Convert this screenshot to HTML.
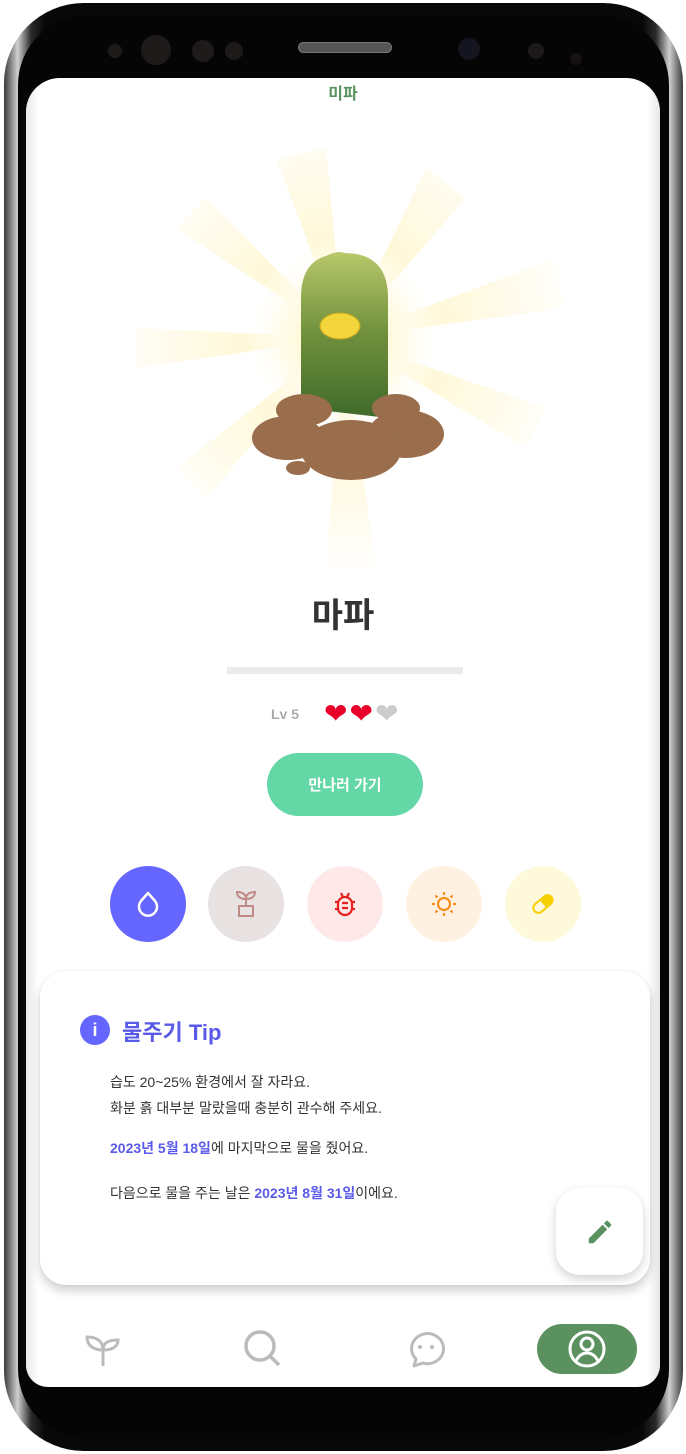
<!DOCTYPE html>
<html><head><meta charset="utf-8"><style>
*{margin:0;padding:0;box-sizing:border-box}
body{width:686px;height:1454px;background:#fff;position:relative;overflow:hidden;font-family:"Liberation Sans","Noto Sans CJK KR",sans-serif}
.phone{position:absolute;left:4px;top:3px;width:679px;height:1448px;border-radius:80px;background:linear-gradient(90deg,#3a3a3a,#cfcfcf 2%,#2a2a2a 4%,#080808 6%,#080808 94%,#2a2a2a 96%,#cfcfcf 98%,#3a3a3a)}
.inner{position:absolute;left:14px;top:12px;width:651px;height:1424px;border-radius:70px;background:#050505}
.screen{position:absolute;left:26px;top:78px;width:634px;height:1309px;background:#fff;border-radius:34px 34px 22px 22px;overflow:hidden}
.t{position:absolute;left:0;width:100%;text-align:center}
.circ{position:absolute;top:788px;width:76px;height:76px;border-radius:50%;display:flex;align-items:center;justify-content:center}
</style></head><body>
<div class="phone"><div class="inner"></div></div>
<div style="position:absolute;left:108px;top:44px;width:14px;height:14px;border-radius:50%;background:#1e1a1a"></div>
<div style="position:absolute;left:141px;top:35px;width:30px;height:30px;border-radius:50%;background:#1e1a1a"></div>
<div style="position:absolute;left:192px;top:40px;width:22px;height:22px;border-radius:50%;background:#1e1a1a"></div>
<div style="position:absolute;left:225px;top:42px;width:18px;height:18px;border-radius:50%;background:#1e1a1a"></div>
<div style="position:absolute;left:298px;top:42px;width:94px;height:11px;border-radius:6px;background:#555;border:1px solid #777"></div>
<div style="position:absolute;left:458px;top:38px;width:22px;height:22px;border-radius:50%;background:#151520"></div>
<div style="position:absolute;left:528px;top:43px;width:16px;height:16px;border-radius:50%;background:#1e1a1a"></div>
<div style="position:absolute;left:570px;top:53px;width:12px;height:12px;border-radius:50%;background:#161212"></div>

<div class="screen">
<div style="position:absolute;left:0;top:0;width:12px;height:100%;background:linear-gradient(90deg,#e6e6e6,#fff)"></div>
<div style="position:absolute;right:0;top:0;width:12px;height:100%;background:linear-gradient(270deg,#e6e6e6,#fff)"></div>
<div class="t" style="top:2px;color:#5a915f;font-weight:bold;font-size:16px">미파</div>
<svg style="position:absolute;left:0;top:60px" width="634" height="460" viewBox="0 0 634 460">
<defs><radialGradient id="g" cx="50%" cy="50%" r="50%"><stop offset="0" stop-color="#fff6b8"/><stop offset=".6" stop-color="#fffbe8"/><stop offset="1" stop-color="#fff" stop-opacity="0"/></radialGradient>
<radialGradient id="r" gradientUnits="userSpaceOnUse" cx="318" cy="200" r="240"><stop offset="0" stop-color="#fff3b0"/><stop offset=".7" stop-color="#fffae6"/><stop offset="1" stop-color="#fff"/></radialGradient>
<linearGradient id="c" x1="0" y1="0" x2="0" y2="1"><stop offset="0" stop-color="#b8c86a"/><stop offset=".5" stop-color="#6f8f3c"/><stop offset="1" stop-color="#3f6a2a"/></linearGradient></defs>
<g fill="url(#r)" opacity=".8">
<polygon points="318,200 250,20 300,10"/><polygon points="318,200 400,30 440,60"/><polygon points="318,200 530,120 540,170"/><polygon points="318,200 520,270 500,310"/><polygon points="318,200 350,430 300,430"/><polygon points="318,200 150,90 180,60"/><polygon points="318,200 110,230 110,190"/><polygon points="318,200 150,330 180,360"/>
</g>
<circle cx="318" cy="200" r="100" fill="url(#g)"/>
<path d="M275,270 L275,160 Q275,125 300,118 Q312,112 318,115 Q362,115 362,160 L362,280 Z" fill="url(#c)"/>
<ellipse cx="314" cy="188" rx="20" ry="13" fill="#f2d53a" stroke="#c9a820" stroke-width="1"/>
<g fill="#9a6e4c"><ellipse cx="262" cy="300" rx="36" ry="22"/><ellipse cx="380" cy="296" rx="38" ry="24"/><ellipse cx="325" cy="312" rx="50" ry="30"/><ellipse cx="278" cy="272" rx="28" ry="16"/><ellipse cx="370" cy="270" rx="24" ry="14"/><ellipse cx="272" cy="330" rx="12" ry="7"/></g>
</svg>
<div class="t" style="top:510px;font-size:34px;font-weight:bold;color:#333">마파</div>
<div style="position:absolute;left:201px;top:589px;width:236px;height:7px;background:#ebebeb"></div>
<div style="position:absolute;left:245px;top:628px;font-size:14px;color:#aaa;font-weight:bold">Lv 5</div>
<div style="position:absolute;left:298px;top:622px;font-size:28px;line-height:28px;letter-spacing:2px"><span style="color:#e8002a">❤</span><span style="color:#e8002a">❤</span><span style="color:#ccc">❤</span></div>
<div style="position:absolute;left:241px;top:675px;width:156px;height:63px;border-radius:32px;background:#63d8a6;color:#fff;font-weight:bold;font-size:15px;display:flex;align-items:center;justify-content:center">만나러 가기</div>
<div class="circ" style="left:84px;background:#6466ff"><svg width="30" height="30" viewBox="0 0 30 30"><path d="M15 4 L22 12 A9 9 0 1 1 8 12 Z" fill="none" stroke="#fff" stroke-width="2.5" stroke-linejoin="round"/></svg></div>
<div class="circ" style="left:182px;background:#e8e2e2"><svg width="26" height="28" viewBox="0 0 26 28" fill="none" stroke="#c08a86" stroke-width="2"><path d="M13 16V9M13 9C13 4 9 2 4 2C4 7 8 9 13 9ZM13 9C13 4 17 2 22 2C22 7 18 9 13 9Z"/><rect x="6" y="16" width="14" height="10"/></svg></div>
<div class="circ" style="left:281px;background:#ffe8e8"><svg width="26" height="28" viewBox="0 0 26 28" fill="none" stroke="#e82020" stroke-width="2.2"><rect x="6" y="7" width="14" height="18" rx="7"/><path d="M10 13h6M10 18h6M9 3l2 4M17 3l-2 4M3 12h3M3 19h3M20 12h3M20 19h3"/></svg></div>
<div class="circ" style="left:380px;background:#fff1e2"><svg width="30" height="30" viewBox="0 0 30 30" fill="none" stroke="#f5901e" stroke-width="2.2"><circle cx="15" cy="15" r="6"/><path d="M15 3v3M15 24v3M3 15h3M24 15h3M6.5 6.5l2 2M21.5 21.5l2 2M6.5 23.5l2-2M21.5 8.5l2-2"/></svg></div>
<div class="circ" style="left:479px;background:#fff9dc"><svg width="28" height="28" viewBox="0 0 28 28"><g transform="rotate(-40 14 14)"><rect x="3" y="9" width="22" height="10" rx="5" fill="none" stroke="#f5cf00" stroke-width="2"/><path d="M14 9h6a5 5 0 0 1 0 10h-6z" fill="#f5cf00"/></g></svg></div>

<div style="position:absolute;left:14px;top:893px;width:610px;height:314px;background:#fff;border-radius:26px;box-shadow:0 6px 10px rgba(0,0,0,.18),0 0 2px rgba(0,0,0,.08)">
<div style="position:absolute;left:40px;top:44px;width:30px;height:30px;border-radius:50%;background:#6466ff;color:#fff;font-weight:bold;font-size:18px;text-align:center;line-height:30px">i</div>
<div style="position:absolute;left:82px;top:44px;color:#5a5ae8;font-weight:bold;font-size:22px">물주기 Tip</div>
<div style="position:absolute;left:70px;top:98px;font-size:14px;line-height:26px;color:#333">습도 20~25% 환경에서 잘 자라요.<br>화분 흙 대부분 말랐을때 충분히 관수해 주세요.</div>
<div style="position:absolute;left:70px;top:167px;font-size:14px;color:#333"><b style="color:#5a5ae8">2023년 5월 18일</b>에 마지막으로 물을 줬어요.</div>
<div style="position:absolute;left:70px;top:212px;font-size:14px;color:#333">다음으로 물을 주는 날은 <b style="color:#5a5ae8">2023년 8월 31일</b>이에요.</div>
</div>
<div style="position:absolute;left:530px;top:1110px;width:87px;height:87px;border-radius:24px;background:#fff;box-shadow:0 4px 10px rgba(0,0,0,.18);display:flex;align-items:center;justify-content:center"><svg width="30" height="30" viewBox="0 0 24 24"><path d="M3 17.25V21h3.75L17.8 9.94l-3.75-3.75L3 17.25zM20.7 7.04a1 1 0 0 0 0-1.41l-2.34-2.34a1 1 0 0 0-1.41 0l-1.83 1.83 3.75 3.75 1.83-1.83z" fill="#5a915f"/></svg></div>

<svg style="position:absolute;left:56px;top:1250px" width="42" height="42" viewBox="0 0 42 42" fill="none" stroke="#bbb" stroke-width="3"><path d="M21 38V22M21 22C21 12 13 9 5 9C5 18 12 22 21 22ZM21 22C21 15 26 12 36 12C36 20 28 22 21 22Z"/></svg>
<svg style="position:absolute;left:216px;top:1250px" width="42" height="42" viewBox="0 0 42 42" fill="none" stroke="#bbb" stroke-width="3.5"><circle cx="18" cy="18" r="14"/><path d="M28 28l9 9"/></svg>
<svg style="position:absolute;left:379px;top:1250px" width="42" height="42" viewBox="0 0 42 42" fill="none" stroke="#bbb" stroke-width="3"><path d="M9 38l2-7A16 15 0 1 1 18 35Z" stroke-linejoin="round"/><circle cx="15" cy="19" r="2" fill="#bbb" stroke="none"/><circle cx="27" cy="19" r="2" fill="#bbb" stroke="none"/></svg>
<div style="position:absolute;left:511px;top:1246px;width:100px;height:50px;border-radius:25px;background:#5a915f;display:flex;align-items:center;justify-content:center"><svg width="40" height="40" viewBox="0 0 40 40" fill="none" stroke="#fff" stroke-width="3"><circle cx="20" cy="20" r="17"/><circle cx="20" cy="15" r="6"/><path d="M9 32c3-6 7-8 11-8s8 2 11 8"/></svg></div>
</div>
</body></html>
